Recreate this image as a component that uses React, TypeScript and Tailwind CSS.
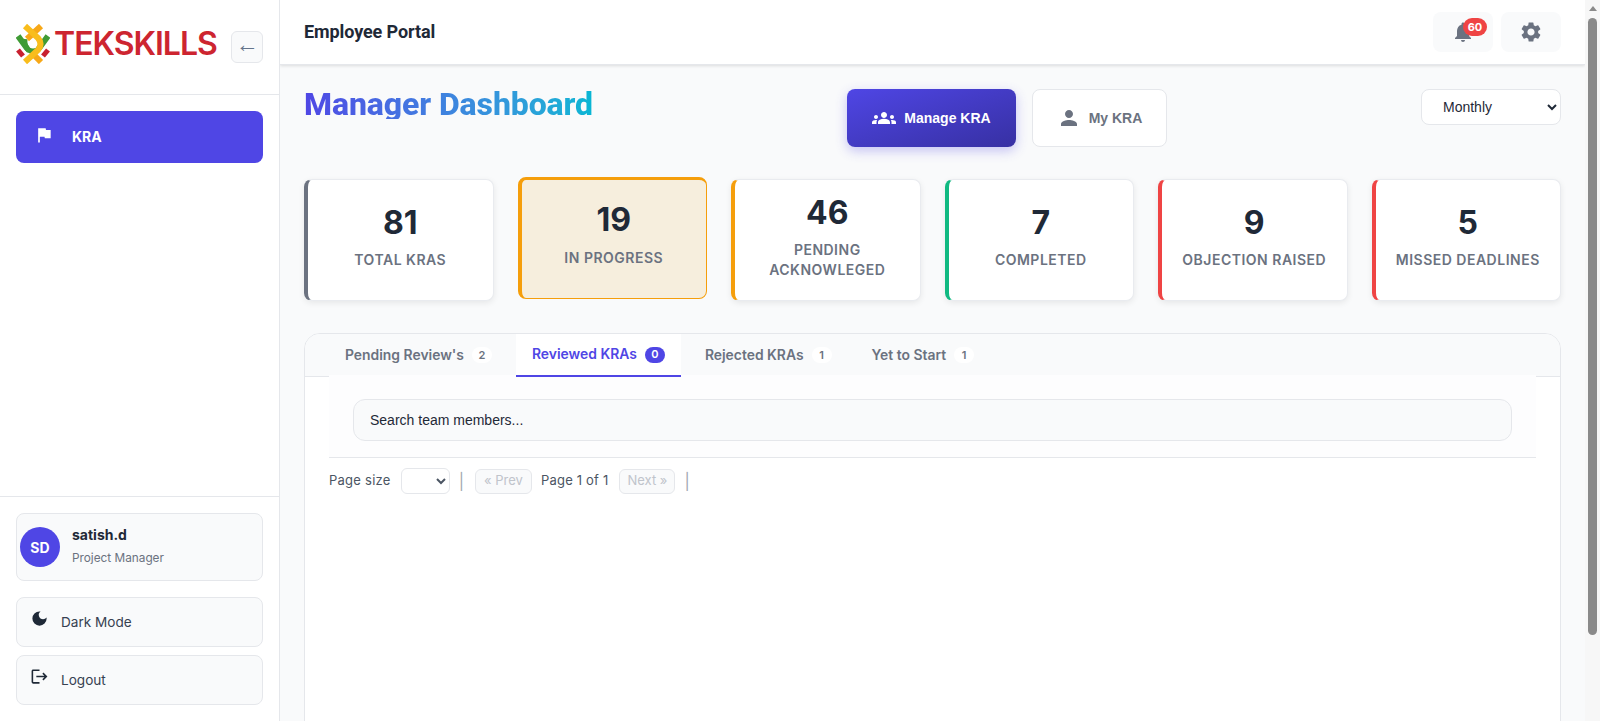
import React from "react";
import { MdFlag, MdDarkMode, MdLogout, MdNotifications, MdSettings, MdGroups, MdPerson } from "react-icons/md";

function Logo() {
  return (
    <div className="flex items-center w-[204px] h-[40px]">
      <svg width="34" height="40" viewBox="0 0 34 40" fill="none" strokeLinecap="butt" className="shrink-0">
        <path d="M2 26 L7 32 M32 26 L27 32" stroke="#c8202f" strokeWidth="5" />
        <path d="M2 12 L10 23 Q17 31 24 23 L32 12" stroke="#3f9b35" strokeWidth="6" />
        <path d="M9 15 Q8 22 13 27" stroke="#3f9b35" strokeWidth="5" />
        <path d="M25 2 L11 15" stroke="#f7a818" strokeWidth="6" />
        <circle cx="17" cy="20" r="4.5" fill="#ffffff" />
        <path d="M17 30 L25 38" stroke="#f7a818" strokeWidth="6" />
        <path d="M9 2 L22 14 Q27 20 22 26 L9 38" stroke="#f9bd1c" strokeWidth="6" />
      </svg>
      <span className="ml-[4px] font-['Inter',sans-serif] text-[32px] leading-none font-semibold tracking-[-1px] text-[#cd2530] whitespace-nowrap">TEKSKILLS</span>
    </div>
  );
}

function Sidebar() {
  return (
    <aside className="w-[280px] shrink-0 h-full bg-white border-r border-[#e5e7eb] flex flex-col">
      <div className="h-[95px] border-b border-[#e5e7eb] flex items-start justify-between pl-4 pr-4 pt-6">
        <Logo />
        <button className="mt-[7px] w-8 h-8 pb-[6px] rounded-md border border-[#e5e7eb] bg-[#f9fafb] text-[#64748b] text-[23px] font-['Liberation_Sans',sans-serif] flex items-center justify-center">←</button>
      </div>
      <nav className="flex-1 px-4 pt-4">
        <div className="h-[52px] rounded-lg bg-[#4f46e5] text-white flex items-center pl-[18px]">
          <MdFlag className="w-5 h-5 mb-[4px]" />
          <span className="ml-[18px] mb-[2px] text-[14px] font-bold">KRA</span>
        </div>
      </nav>
      <div className="border-t border-[#e5e7eb] px-4 pt-4 pb-4 flex flex-col">
        <div className="h-[68px] rounded-lg border border-[#e5e7eb] bg-[#f9fafb] flex items-center pl-[3px]">
          <div className="w-10 h-10 rounded-full bg-[#4f46e5] text-white text-[14px] font-bold flex items-center justify-center">SD</div>
          <div className="ml-3 -mt-[4px]">
            <div className="text-[14px] font-bold text-[#1f2937] leading-5">satish.d</div>
            <div className="text-[11.8px] text-[#6b7280] leading-4 mt-[5px]">Project Manager</div>
          </div>
        </div>
        <div className="mt-4 h-[50px] rounded-lg border border-[#e5e7eb] bg-[#f9fafb] flex items-center pl-[13px] text-[13.6px] text-[#374151]">
          <MdDarkMode className="w-[19px] h-[19px] text-[#1f2937] mb-[7px]" />
          <span className="ml-[12px]">Dark Mode</span>
        </div>
        <div className="mt-2 h-[50px] rounded-lg border border-[#e5e7eb] bg-[#f9fafb] flex items-center pl-[13px] text-[13.6px] text-[#374151]">
          <MdLogout className="w-[19px] h-[19px] text-[#1f2937] mb-[8px]" />
          <span className="ml-[12px]">Logout</span>
        </div>
      </div>
    </aside>
  );
}

function Header() {
  return (
    <header className="h-[65px] shrink-0 bg-white shadow-[0_1px_3px_rgba(0,0,0,0.12)] border-b border-[#e5e7eb] flex items-center justify-between pl-6 pr-6 relative z-10">
      <h1 className="font-['Roboto',sans-serif] text-[18px] font-bold text-[#1f2937] -mt-[2px] tracking-[-0.1px]">Employee Portal</h1>
      <div className="flex gap-2">
        <button className="relative w-[60px] h-10 rounded-lg bg-[#f9fafb] flex items-center justify-center text-[#6b7280]">
          <MdNotifications className="w-6 h-6" />
          <span className="absolute top-[6px] left-[30px] h-[18px] w-6 rounded-full bg-[#ef4444] text-white text-[11px] font-bold flex items-center justify-center">60</span>
        </button>
        <button className="w-[60px] h-10 rounded-lg bg-[#f9fafb] flex items-center justify-center text-[#6b7280]">
          <MdSettings className="w-6 h-6" />
        </button>
      </div>
    </header>
  );
}

type Stat = { n: string; label: string; bar: string; active?: boolean };

const stats: Stat[] = [
  { n: "81", label: "TOTAL KRAS", bar: "border-l-[#6b7280]" },
  { n: "19", label: "IN PROGRESS", bar: "border-l-[#f59e0b]", active: true },
  { n: "46", label: "PENDING ACKNOWLEGED", bar: "border-l-[#f59e0b]" },
  { n: "7", label: "COMPLETED", bar: "border-l-[#10b981]" },
  { n: "9", label: "OBJECTION RAISED", bar: "border-l-[#ef4444]" },
  { n: "5", label: "MISSED DEADLINES", bar: "border-l-[#ef4444]" },
];

function StatCard({ s }: { s: Stat }) {
  const base = "h-[122px] rounded-lg flex flex-col items-center justify-center px-4 text-center";
  const look = s.active
    ? "bg-[#f6eedd] border border-l-4 border-t-[3px] border-[#f59e0b] -translate-y-[2px] pb-[9px]"
    : "bg-white border border-l-4 border-[#e9ebef] shadow-[0_2px_6px_rgba(0,0,0,0.08)] pb-[6px]";
  return (
    <div className={`${base} ${look} ${s.bar}`}>
      <div className="text-[32px] leading-[38px] font-bold text-[#1f2937]">{s.n}</div>
      <div className={`${s.active ? "mt-[9px]" : "mt-[8px]"} text-[14px] leading-5 font-semibold tracking-[0.5px] text-[#6b7280]`}>{s.label}</div>
    </div>
  );
}

function Tab({ label, count, active }: { label: string; count: string; active?: boolean }) {
  return (
    <div className={`h-[43px] px-4 flex items-center gap-2 text-[13.9px] font-semibold ${active ? "bg-white text-[#4f46e5] border-b-2 border-[#4f46e5]" : "text-[#6b7280] pb-[1px]"}`}>
      <span>{label}</span>
      <span className={`h-[16px] min-w-[20px] px-[6px] rounded-full text-[11px] flex items-center justify-center ${active ? "bg-[#4f46e5] text-white" : "bg-white text-[#6b7280]"}`}>{count}</span>
    </div>
  );
}

function Main() {
  return (
    <main className="flex-1 min-w-0 h-full flex flex-col bg-[#f9fafb] overflow-hidden">
      <Header />
      <div className="px-6 pt-6 flex-1 min-h-0 overflow-hidden">
        <div className="relative h-[58px] flex justify-between items-start">
          <h2 className="font-['Roboto',sans-serif] text-[32px] leading-[30px] font-extrabold tracking-[-0.1px] bg-gradient-to-r from-[#4f46e5] to-[#06b6d4] bg-clip-text text-transparent">Manager Dashboard</h2>
          <div className="absolute left-[543px] top-0 flex gap-4 font-['Liberation_Sans',sans-serif] text-[14px] font-bold">
            <button className="w-[169px] h-[58px] rounded-lg bg-gradient-to-br from-[#4f46e5] to-[#3730a3] text-white flex items-center justify-center gap-2 shadow-[0_4px_12px_rgba(79,70,229,0.3)]">
              <MdGroups className="w-6 h-6" />
              <span>Manage KRA</span>
            </button>
            <button className="w-[135px] h-[58px] rounded-lg bg-white border border-[#e5e7eb] text-[#6b7280] flex items-center justify-center gap-2">
              <MdPerson className="w-6 h-6" />
              <span>My KRA</span>
            </button>
          </div>
          <select defaultValue="Monthly" className="w-[140px] h-[36px] rounded-lg bg-white border border-[#e5e7eb] pl-[17px] text-[14px] text-[#1f2937] font-['Liberation_Sans',sans-serif]">
            <option>Monthly</option>
          </select>
        </div>
        <div className="mt-[32px] grid grid-cols-6 gap-6">
          {stats.map((s) => <StatCard key={s.n} s={s} />)}
        </div>
        <div className="mt-[32px] h-[500px] rounded-2xl border border-[#e5e7eb] bg-white overflow-hidden">
          <div className="h-[43px] bg-[#f9fafb] border-b border-[#e5e7eb] flex pl-6 gap-2">
            <Tab label="Pending Review's" count="2" />
            <Tab label="Reviewed KRAs" count="0" active />
            <Tab label="Rejected KRAs" count="1" />
            <Tab label="Yet to Start" count="1" />
          </div>
          <div className="mx-6 -mt-[2px] bg-white">
            <div className="h-[83px] bg-[#fdfdfe] border-b border-[#e5e7eb] px-6 pt-6">
              <input readOnly value="Search team members..." className="w-full h-[42px] rounded-xl border border-[#e5e7eb] bg-[#f9fafb] px-4 text-[14px] text-[#1f2937] font-['Liberation_Sans',sans-serif] outline-none" />
            </div>
            <div className="h-[46px] flex items-center text-[13px] text-[#4b5563]">
              <span className="tracking-[0.25px]">Page size</span>
              <select className="ml-[10px] w-[49px] h-[26px] rounded-md bg-white border border-[#e5e7eb]"></select>
              <span className="ml-[9px] text-[#a3a8b0] text-[16px]">|</span>
              <button className="ml-[11px] w-[57px] h-[25px] rounded-md border border-[#e5e7eb] bg-[#f9fafb] text-[#c0c4cb] text-[13px]">« Prev</button>
              <span className="ml-[9px] tracking-[0.2px]">Page 1 of 1</span>
              <button className="ml-[11px] w-[56px] h-[25px] rounded-md border border-[#e5e7eb] bg-[#f9fafb] text-[#c0c4cb] text-[13px]">Next »</button>
              <span className="ml-[9px] text-[#a3a8b0] text-[16px]">|</span>
            </div>
          </div>
        </div>
      </div>
    </main>
  );
}

function Scrollbar() {
  return (
    <div className="w-[15px] shrink-0 h-full bg-[#f7f7f7] flex flex-col items-center">
      <div className="mt-[6px] w-0 h-0 border-l-[4px] border-r-[4px] border-b-[5px] border-l-transparent border-r-transparent border-b-[#8a8a8a]"></div>
      <div className="mt-[7px] w-[9px] h-[617px] rounded-full bg-[#8a8a8a]"></div>
    </div>
  );
}

export default function App() {
  return (
    <div className="h-screen w-full flex overflow-hidden font-['Inter',sans-serif]">
      <Sidebar />
      <Main />
      <Scrollbar />
    </div>
  );
}
